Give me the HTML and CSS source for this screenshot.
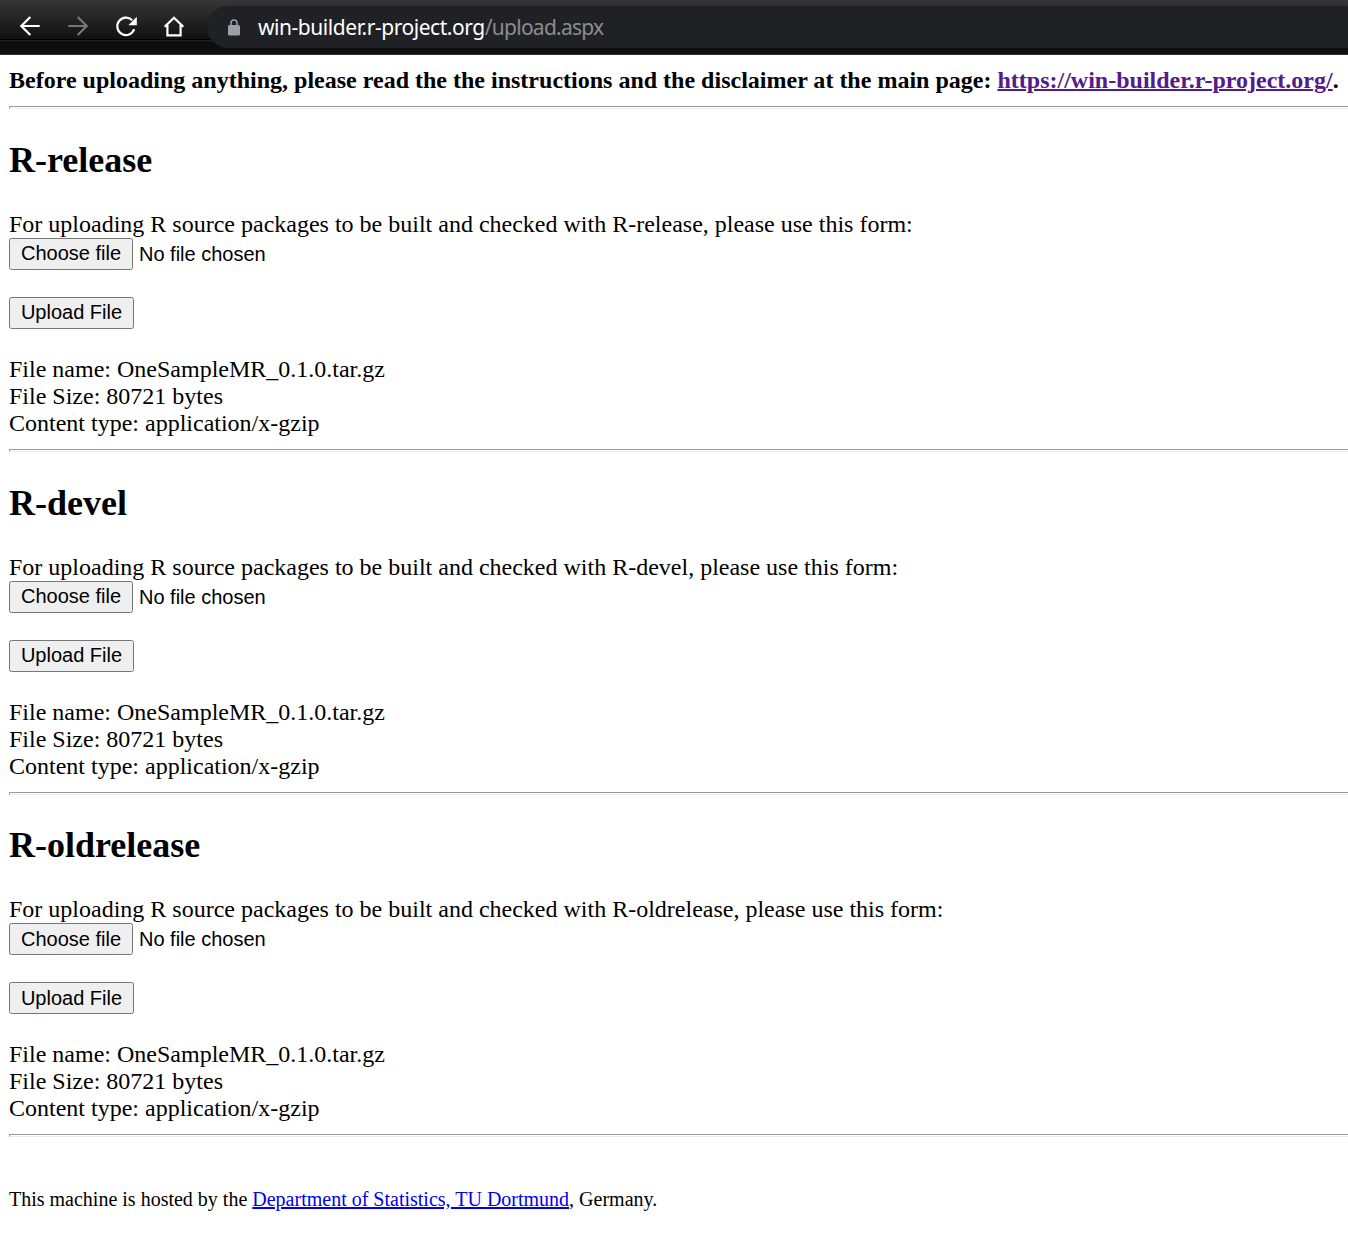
FILE: index.html
```html
<!DOCTYPE html>
<html lang="en">
<head>
<meta charset="utf-8">
<title>win-builder upload</title>
<link rel="stylesheet" href="styles.css">
</head>
<body>
<header class="toolbar">
  <nav class="nav">
    <svg class="icon" viewBox="0 0 24 24"><path d="M21.7 12H3.5M12.3 3L3.3 12l9 9"/></svg>
    <svg class="icon icon-off" viewBox="0 0 24 24"><path d="M2.3 12h18.2M11.7 3l9 9-9 9"/></svg>
    <svg class="icon" viewBox="0 0 24 24"><path d="M20.2 15.2A8.7 8.7 0 1 1 18.2 6.2"/><path class="solid" d="M22.8 2.8v8.4h-8.4z"/></svg>
    <svg class="icon" viewBox="0 0 24 24"><path d="M2.7 12.8L12 3.7l9.3 9.1M5.4 11v10.4h13.2V11"/></svg>
  </nav>
  <div class="address">
    <svg class="lock" viewBox="0 0 12 17"><rect y="6" width="12" height="10.5" rx="1.5"/><path d="M3 7V4a3 3 0 0 1 6 0v3"/></svg>
    <span class="url">win-builder.r-project.org<span class="path">/upload.aspx</span></span>
  </div>
</header>
<main class="page">
  <p class="notice"><b>Before uploading anything, please read the the instructions and the disclaimer at the main page: <a class="visited" href="#">https://win-builder.r-project.org/</a>.</b></p>
  <hr class="rule">
  <section class="release">
    <h2 class="heading">R-release</h2>
    <p class="line">For uploading R source packages to be built and checked with R-release, please use this form:</p>
    <div class="chooser"><button class="button choose">Choose file</button><span class="chosen">No file chosen</span></div>
    <button class="button upload">Upload File</button>
    <p class="line">File name: OneSampleMR_0.1.0.tar.gz</p>
    <p class="line">File Size: 80721 bytes</p>
    <p class="line">Content type: application/x-gzip</p>
  </section>
  <hr class="rule">
  <section class="release">
    <h2 class="heading">R-devel</h2>
    <p class="line">For uploading R source packages to be built and checked with R-devel, please use this form:</p>
    <div class="chooser"><button class="button choose">Choose file</button><span class="chosen">No file chosen</span></div>
    <button class="button upload">Upload File</button>
    <p class="line">File name: OneSampleMR_0.1.0.tar.gz</p>
    <p class="line">File Size: 80721 bytes</p>
    <p class="line">Content type: application/x-gzip</p>
  </section>
  <hr class="rule">
  <section class="release last">
    <h2 class="heading">R-oldrelease</h2>
    <p class="line">For uploading R source packages to be built and checked with R-oldrelease, please use this form:</p>
    <div class="chooser"><button class="button choose">Choose file</button><span class="chosen">No file chosen</span></div>
    <button class="button upload">Upload File</button>
    <p class="line">File name: OneSampleMR_0.1.0.tar.gz</p>
    <p class="line">File Size: 80721 bytes</p>
    <p class="line">Content type: application/x-gzip</p>
  </section>
  <hr class="rule">
  <p class="host">This machine is hosted by the <a class="link" href="#">Department of Statistics, TU Dortmund</a>, Germany.</p>
</main>
</body>
</html>
```
FILE: styles.css
```css
body {
  margin: 0;
  background: #fff;
  color: #000;
  font: 24px/27px "Liberation Serif", "Times New Roman", serif;
  overflow: hidden;
}
.toolbar {
  display: flex;
  align-items: flex-start;
  box-sizing: border-box;
  height: 55px;
  padding-top: 6px;
  border-bottom: 1px solid #353535;
  background:
    linear-gradient(#363636, #111 39px, #000 39px, #000 40px, #1f1f1f 40px, #1f1f1f 41px, #0c0c0c 42px, #101010);
}
.nav {
  display: flex;
  gap: 24px;
  width: 189px;
  padding: 8px 0 0 18px;
  box-sizing: content-box;
}
.icon {
  width: 24px;
  height: 24px;
  fill: none;
  stroke: #fff;
  stroke-width: 2.2;
}
.icon-off { stroke: #777; }
.solid { fill: #fff; stroke: none; }
.address {
  display: flex;
  align-items: center;
  flex: 1;
  height: 42px;
  padding-left: 21px;
  border-radius: 21px 0 0 21px;
  background: #202124;
}
.lock {
  width: 12px;
  height: 17px;
  fill: #9aa0a6;
}
.lock path { fill: none; stroke: #9aa0a6; stroke-width: 1.5; }
.url {
  margin-left: 18px;
  color: #fff;
  font: 21px/28px "Noto Sans", sans-serif;
  letter-spacing: -0.45px;
  white-space: nowrap;
}
.path { color: #8b8d90; letter-spacing: -0.75px; }
.page {
  padding: 12px 0 0 9px;
  white-space: nowrap;
}
.notice, .line, .host { margin: 0; }
.notice { letter-spacing: 0.004px; }
.visited { color: #551a8b; }
.link { color: #00e; }
.visited, .link { text-decoration-thickness: 2px; }
.rule {
  box-sizing: border-box;
  height: 3px;
  margin: 12px -9px 31px 0;
  border: 1px solid #ededed;
  border-top-color: #999;
  border-left-color: #999;
}
.heading {
  margin: 0 0 30px;
  font-size: 36px;
  line-height: 41px;
}
.last .heading { margin-top: -1px; }
.chooser {
  display: flex;
  align-items: center;
  gap: 6px;
}
.button {
  display: block;
  box-sizing: border-box;
  height: 32px;
  padding: 0 0 2px;
  border: 1px solid #767676;
  border-radius: 2.5px;
  background: #efefef;
  color: #000;
  font: 20px/28px "Liberation Sans", Arial, sans-serif;
}
.last .button { padding: 1px 0; }
.choose { width: 124px; }
.upload { width: 125px; margin: 27px 0; }
.chosen { font: 20px/28px "Liberation Sans", Arial, sans-serif; }
.host {
  margin-top: 49px;
  font-size: 20px;
}
```
